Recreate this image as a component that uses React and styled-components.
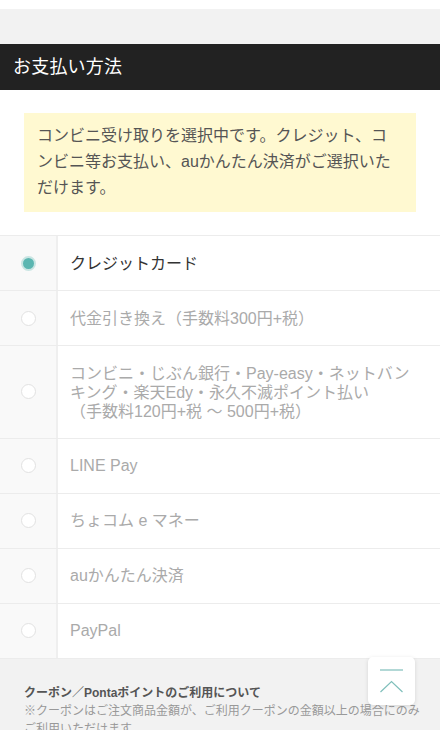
import React from "react";
import styled, { createGlobalStyle } from "styled-components";

const Global = createGlobalStyle`
  html, body { margin: 0; padding: 0; background: #fff; }
  body {
    font-family: "Liberation Sans", "Noto Sans CJK JP", sans-serif;
    -webkit-font-smoothing: antialiased;
  }
  * { box-sizing: border-box; }
`;

const Page = styled.div`
  width: 440px;
  height: 730px;
  overflow: hidden;
  position: relative;
  padding-top: 9px;
`;

const Band = styled.div`
  height: 35px;
  background: #f2f2f2;
`;

const Header = styled.h2`
  margin: 0;
  height: 46px;
  background: #222222;
  color: #fff;
  font-size: 18px;
  font-weight: 400;
  line-height: 46px;
  padding-left: 13px;
  letter-spacing: 0.2px;
`;

const Notice = styled.p`
  margin: 23px 24px 0;
  background: #fff9d1;
  color: #555;
  font-size: 16px;
  line-height: 26px;
  padding: 10px 13px 11px;
  white-space: nowrap;
`;

const Table = styled.div`
  margin-top: 23px;
  border-top: 1px solid #ececec;
`;

const Row = styled.label`
  display: grid;
  grid-template-columns: 58px 1fr;
  border-bottom: 1px solid #ececec;
  min-height: 55px;
`;

const RadioCell = styled.div`
  background: #f9f9f9;
  border-right: 2px solid #efefef;
  display: flex;
  align-items: center;
  padding-left: 21px;
`;

const Radio = styled.span`
  width: 15px;
  height: 15px;
  border-radius: 50%;
  background: ${(p) => (p.$checked ? "#5bb6b1" : "#fff")};
  border: ${(p) => (p.$checked ? "2px solid #c9e5e3" : "1.5px solid #e2e2e2")};
`;

const Label = styled.div`
  display: flex;
  align-items: center;
  padding: 17.5px 10px 17px 12px;
  font-size: 16px;
  line-height: 19px;
  color: ${(p) => (p.$checked ? "#333" : "#aaa")};
  white-space: nowrap;
`;

const Footer = styled.div`
  background: #f2f2f2;
  padding: 25px 24px 20px;
  font-size: 12px;
  line-height: 18px;
  white-space: nowrap;
`;

const FooterTitle = styled.div`
  font-weight: 700;
  color: #555;
`;

const FooterText = styled.div`
  color: #999;
`;

const TopButton = styled.button`
  position: absolute;
  right: 25px;
  bottom: 25px;
  width: 47px;
  height: 48px;
  border: none;
  border-radius: 5px;
  background: #fff;
  box-shadow: 0 1px 4px rgba(0, 0, 0, 0.12);
  padding: 0;
  display: flex;
  align-items: center;
  justify-content: center;
`;

const methods = [
  { label: "クレジットカード", checked: true },
  { label: "代金引き換え（手数料300円+税）" },
  {
    label: (
      <>
        コンビニ・じぶん銀行・Pay-easy・ネットバン
        <br />
        キング・楽天Edy・永久不滅ポイント払い
        <br />
        （手数料120円+税 〜 500円+税）
      </>
    ),
    multi: true,
  },
  { label: "LINE Pay" },
  { label: "ちょコム e マネー" },
  { label: "auかんたん決済" },
  { label: "PayPal" },
];

export default function App() {
  return (
    <Page>
      <Global />
      <Band />
      <Header>お支払い方法</Header>
      <Notice>
        コンビニ受け取りを選択中です。クレジット、コ
        <br />
        ンビニ等お支払い、auかんたん決済がご選択いた
        <br />
        だけます。
      </Notice>
      <Table>
        {methods.map((m, i) => (
          <Row key={i}>
            <RadioCell>
              <Radio $checked={m.checked} />
            </RadioCell>
            <Label $checked={m.checked}>
              <div>{m.label}</div>
            </Label>
          </Row>
        ))}
      </Table>
      <Footer>
        <FooterTitle>クーポン／Pontaポイントのご利用について</FooterTitle>
        <FooterText>
          ※クーポンはご注文商品金額が、ご利用クーポンの金額以上の場合にのみ
          <br />
          ご利用いただけます。
        </FooterText>
      </Footer>
      <TopButton aria-label="ページトップへ">
        <svg width="47" height="48" viewBox="0 0 47 48">
          <line x1="12" y1="13" x2="35" y2="13" stroke="#7fbfbb" strokeWidth="1.2" />
          <polyline points="12.5,35 23.5,24.5 34.5,35" fill="none" stroke="#7fbfbb" strokeWidth="1.2" />
        </svg>
      </TopButton>
    </Page>
  );
}
